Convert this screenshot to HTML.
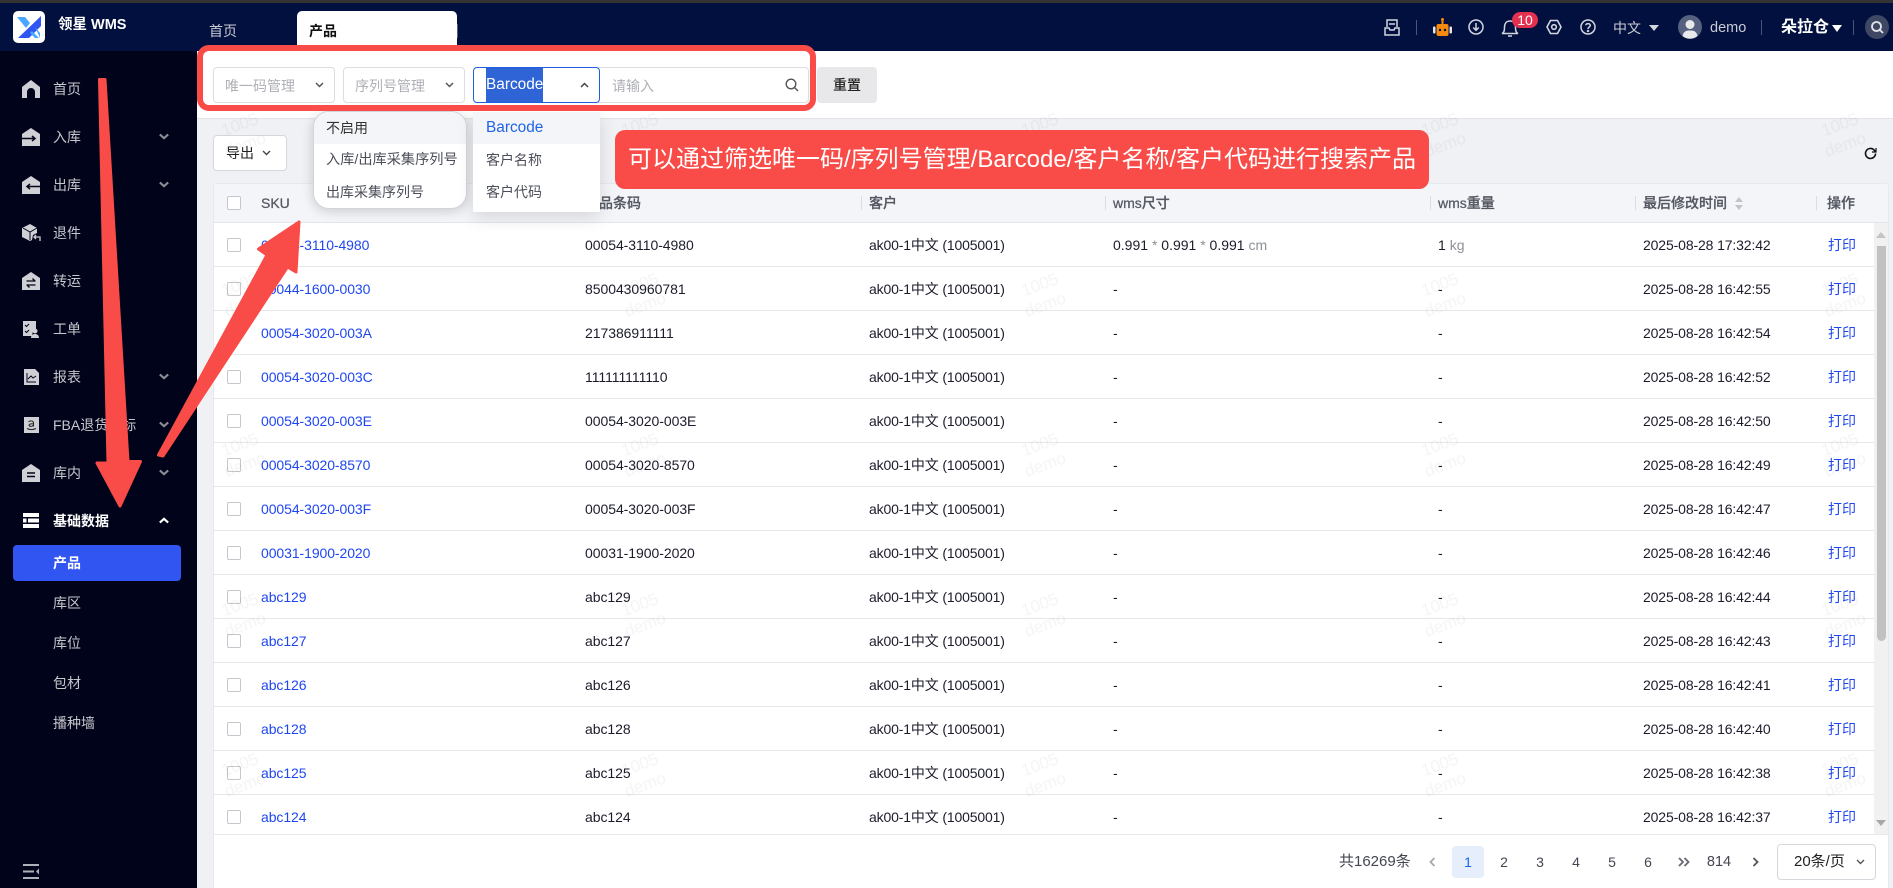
<!DOCTYPE html>
<html lang="zh"><head><meta charset="utf-8"><title>领星 WMS</title>
<style>
*{box-sizing:border-box;margin:0;padding:0}
html,body{width:1893px;height:888px;overflow:hidden;background:#f0f1f5;font-family:"Liberation Sans","Noto Sans CJK SC",sans-serif;font-size:14px;color:#1b1c2b}
.a{position:absolute;white-space:nowrap}
#top{left:0;top:0;width:1893px;height:51px;background:#02103f}
#strip{left:0;top:0;width:1893px;height:3px;background:#333}
#side{left:0;top:51px;width:197px;height:837px;background:#000319}
.m{left:53px;color:#c7c8cd;line-height:20px}
.ic{left:22px;width:18px;height:18px}
.ch{left:159px;width:10px;height:7px}
#bar{left:197px;top:51px;width:1696px;height:68px;background:#fff;border-bottom:1px solid #e3e4e8}
.sel{height:36px;top:67px;background:#fff;border:1px solid #dcdde1;border-radius:4px}
.ph{color:#aeb0b6;line-height:20px}
.dd{background:#fff;box-shadow:0 6px 16px rgba(0,0,0,.12)}
.it{position:absolute;left:0;right:0;height:32px;line-height:32px;padding-left:12px;color:#4c4f59}
#tb{left:213px;top:183px;width:1676px;height:705px;background:#fff;border:1px solid #e8e9ee;border-bottom:0;border-radius:4px 4px 0 0}
#th{left:214px;top:184px;width:1674px;height:39px;background:#f4f5f9;border-bottom:1px solid #e4e5ea}
.h{top:193px;font-weight:500;color:#555862;line-height:20px;-webkit-text-stroke:.25px #555862}
.sp{top:196px;width:1px;height:14px;background:#dcdde2}
.r{position:absolute;left:214px;width:1660px;height:44px;border-bottom:1px solid #e6e7eb}
.r span{position:absolute;top:12px;line-height:20px;white-space:nowrap}
.r i{position:absolute;left:13px;top:15px;width:14px;height:14px;background:#fff;border:1px solid #c6c7cc;border-radius:2px}
.s{left:47px;color:#1f47f0;letter-spacing:-.08px}.b{left:371px;letter-spacing:-.05px}.c{left:655px;letter-spacing:-.15px}.d{left:899px}.w{left:1224px}.t{left:1429px;letter-spacing:-.13px}.o{left:1614px;color:#1f47f0}
.cb{width:14px;height:14px;background:#fff;border:1px solid #c6c7cc;border-radius:2px}
.g{color:#8d9099}
.pg{top:852px;line-height:20px;color:#444652;width:32px;text-align:center}
svg.wm{position:absolute;left:197px;top:51px}
svg{display:block}
</style></head><body>
<div class="a" id="top"></div><div class="a" id="strip"></div>
<svg class="a" style="left:13px;top:11px" width="32" height="32" viewBox="0 0 32 32"><rect width="32" height="32" rx="5" fill="#fff"/><path d="M4 6h8l5 6-4 5z" fill="#4aa6ff"/><path d="M28 5 5 27h11L28 15z" fill="#2f55f2"/><path d="M19 20l7 7h-4l-5-5zM22 16l5 6v5z" fill="#4aa6ff"/></svg>
<div class="a" style="left:58px;top:15px;color:#fff;font-weight:700;line-height:20px;font-size:14.500px">领星 WMS</div>
<div class="a" style="left:209px;top:21px;color:#c9cbd4;line-height:20px">首页</div>
<div class="a" style="left:297px;top:11px;width:160px;height:40px;background:#fff;border-radius:5px 5px 0 0"></div>
<div class="a" style="left:309px;top:21px;font-weight:700;color:#111;line-height:20px">产品</div>
<div class="a" style="left:457px;top:24px;width:1px;height:14px;background:#555e80"></div>

<!-- header right -->
<svg class="a" style="left:1384px;top:19px" width="16" height="17" viewBox="0 0 16 17" fill="none" stroke="#d2d5dd" stroke-width="1.500"><path d="M3 8V1h10v7M5 5h6M1 9l4 0 1 2h4l1-2h4v7H1z"/></svg>
<div class="a" style="left:1416px;top:20px;width:1px;height:15px;background:#4b5575"></div>
<svg class="a" style="left:1433px;top:18px" width="19" height="18" viewBox="0 0 19 18"><rect x="3.500" y="6" width="12" height="12" rx="2" fill="#f58a0c"/><rect x="8.500" y="1" width="2" height="5" fill="#f58a0c"/><circle cx="9.500" cy="1.500" r="1.500" fill="#f58a0c"/><rect x="0" y="8.500" width="2.500" height="7" rx="1" fill="#e6e6e6"/><rect x="16.500" y="8.500" width="2.500" height="7" rx="1" fill="#e6e6e6"/><circle cx="7" cy="12" r="1.200" fill="#02103f"/><circle cx="12" cy="12" r="1.200" fill="#02103f"/></svg>
<svg class="a" style="left:1468px;top:19px" width="16" height="16" viewBox="0 0 16 16" fill="none" stroke="#d2d5dd" stroke-width="1.500"><circle cx="8" cy="8" r="7"/><path d="M8 4v7M5.200 8.500 8 11.300l2.800-2.800"/></svg>
<svg class="a" style="left:1501px;top:19px" width="18" height="18" viewBox="0 0 18 18" fill="none" stroke="#d2d5dd" stroke-width="1.500"><path d="M1 14.500c2-1 2.500-2.500 2.500-6C3.500 4 6 2 9 2s5.500 2 5.500 6.500c0 3.500.5 5 2.500 6zM7 17h4"/></svg>
<div class="a" style="left:1512px;top:12px;width:26px;height:16px;border-radius:8px;background:#e4304f;color:#fff;text-align:center;line-height:16px;font-size:14px">10</div>
<svg class="a" style="left:1546px;top:19px" width="16" height="16" viewBox="0 0 16 16" fill="none" stroke="#d2d5dd" stroke-width="1.600"><path d="M4.500 1.500h7L15 8l-3.500 6.500h-7L1 8z"/><circle cx="8" cy="8" r="2.300"/></svg>
<svg class="a" style="left:1580px;top:19px" width="16" height="16" viewBox="0 0 16 16" fill="none" stroke="#d2d5dd" stroke-width="1.500"><circle cx="8" cy="8" r="7"/><path d="M5.800 6.300C5.800 4 10.300 4 10.300 6.400 10.300 8 8 8 8 10"/><circle cx="8" cy="12" r=".5"/></svg>
<div class="a" style="left:1613px;top:18px;color:#c9cbd4;line-height:20px">中文</div>
<svg class="a" style="left:1649px;top:25px" width="10" height="6"><path d="M0 0h10L5 6z" fill="#d2d5dd"/></svg>
<svg class="a" style="left:1678px;top:15px" width="24" height="24" viewBox="0 0 24 24"><circle cx="12" cy="12" r="12" fill="#56607f"/><circle cx="12" cy="9.500" r="4.500" fill="#e9e9ec"/><path d="M4.500 21c1-5 4-5.500 7.500-5.500S18.500 16 19.500 21a12 12 0 0 1-15 0z" fill="#e9e9ec"/></svg>
<div class="a" style="left:1710px;top:18px;color:#c9cbd4;line-height:20px;font-size:14.500px">demo</div>
<div class="a" style="left:1761px;top:20px;width:1px;height:15px;background:#4b5575"></div>
<div class="a" style="left:1781px;top:17px;color:#fff;font-weight:700;font-size:16px;line-height:22px">朵拉仓</div>
<svg class="a" style="left:1832px;top:25px" width="10" height="7"><path d="M0 0h10L5 7z" fill="#fff"/></svg>
<div class="a" style="left:1853px;top:20px;width:1px;height:15px;background:#4b5575"></div>
<svg class="a" style="left:1865px;top:15px" width="24" height="24" viewBox="0 0 24 24" fill="none"><circle cx="12" cy="12" r="12" fill="#3e4864"/><circle cx="11.500" cy="11.500" r="4.500" stroke="#e3e4ea" stroke-width="1.800"/><path d="m15 15 3 3" stroke="#e3e4ea" stroke-width="1.800"/></svg>

<!-- sidebar -->
<div class="a" id="side"></div>
<svg class="a ic" style="top:80px" viewBox="0 0 18 18"><path d="M9 0 18 7v11h-5v-6a4 4 0 0 0-8 0v6H0V7z" fill="#cfd0d5"/></svg>
<div class="a m" style="top:79px">首页</div>
<svg class="a ic" style="top:128px" viewBox="0 0 18 18"><path d="M9 0l9 6v12H0V6z" fill="#cfd0d5"/><path d="M0 10.500h12M10 8l3 2.500-3 2.500" fill="none" stroke="#000319" stroke-width="1.500"/></svg>
<div class="a m" style="top:127px">入库</div>
<svg class="a ch" style="top:133px" viewBox="0 0 12 8"><path d="M1 1.500 6 6l5-4.500" fill="none" stroke="#8a8b94" stroke-width="2.500"/></svg>
<svg class="a ic" style="top:176px" viewBox="0 0 18 18"><path d="M9 0l9 6v12H0V6z" fill="#cfd0d5"/><path d="M18 10.500H6M8 8l-3 2.500 3 2.500" fill="none" stroke="#000319" stroke-width="1.500"/></svg>
<div class="a m" style="top:175px">出库</div>
<svg class="a ch" style="top:181px" viewBox="0 0 12 8"><path d="M1 1.500 6 6l5-4.500" fill="none" stroke="#8a8b94" stroke-width="2.500"/></svg>
<svg class="a ic" style="top:224px;width:19px" viewBox="0 0 19 18"><path d="M8 0l7 4v5l-4 2-1 5-2 1-8-4V4z" fill="#cfd0d5"/><path d="M1 4l7 4 7-4M8 8v8" fill="none" stroke="#000319" stroke-width="1"/><path d="M18 17v-4h-6M14 11l-2 2 2 2" fill="none" stroke="#cfd0d5" stroke-width="1.300"/></svg>
<div class="a m" style="top:223px">退件</div>
<svg class="a ic" style="top:272px" viewBox="0 0 18 18"><path d="M9 0l9 6v12H0V6z" fill="#cfd0d5"/><path d="M4.500 9h9M10.500 6.500 13 9M13.500 13h-9M7.500 15.500 5 13" fill="none" stroke="#000319" stroke-width="1.300"/></svg>
<div class="a m" style="top:271px">转运</div>
<svg class="a ic" style="top:320px;width:18px" viewBox="0 0 18 18"><path d="M1 1h13v9l-3 1-1 5H1z" fill="#cfd0d5"/><path d="M3 5l1.500 1.500L7 4M3 11l1.500 1.500L7 10" fill="none" stroke="#000319" stroke-width="1"/><circle cx="13" cy="11" r="2.500" fill="#cfd0d5"/><path d="M9 18c0-3 2-4 4-4s4 1 4 4z" fill="#cfd0d5"/></svg>
<div class="a m" style="top:319px">工单</div>
<svg class="a ic" style="top:368px" viewBox="0 0 18 18"><path d="M2 1h11l4 4v12H2z" fill="#cfd0d5"/><path d="M5 5v9h9M6 11l3-3 2 2 3-2" fill="none" stroke="#000319" stroke-width="1"/></svg>
<div class="a m" style="top:367px">报表</div>
<svg class="a ch" style="top:373px" viewBox="0 0 12 8"><path d="M1 1.500 6 6l5-4.500" fill="none" stroke="#8a8b94" stroke-width="2.500"/></svg>
<svg class="a ic" style="top:416px" viewBox="0 0 18 18"><rect x="2" y="1" width="15" height="16" fill="#cfd0d5"/><path d="M6.500 6c1-1.500 4.500-1.500 5 .5v4M11.500 8c-2-.5-4.500 0-4.500 1.300s3 1.700 4.500-.3" fill="none" stroke="#222" stroke-width="1"/><path d="M5 12.500c3 1.500 6 1.500 9 0" fill="none" stroke="#222" stroke-width="1"/></svg>
<div class="a m" style="top:415px">FBA退货贴标</div>
<svg class="a ch" style="top:421px" viewBox="0 0 12 8"><path d="M1 1.500 6 6l5-4.500" fill="none" stroke="#8a8b94" stroke-width="2.500"/></svg>
<svg class="a ic" style="top:464px" viewBox="0 0 18 18"><path d="M9 0l9 6v12H0V6z" fill="#cfd0d5"/><path d="M5 9h8M5 12.500h8" stroke="#000319" stroke-width="1.500"/></svg>
<div class="a m" style="top:463px">库内</div>
<svg class="a ch" style="top:469px" viewBox="0 0 12 8"><path d="M1 1.500 6 6l5-4.500" fill="none" stroke="#8a8b94" stroke-width="2.500"/></svg>
<svg class="a ic" style="top:513px;left:23px;width:16px;height:15px" viewBox="0 0 16 15"><path d="M0 0h16v4H0zM0 5.500h3.500v4H0zM5 5.500h11v4H5zM0 11h16v4H0z" fill="#fff"/></svg>
<div class="a m" style="top:511px;color:#fff;font-weight:700">基础数据</div>
<svg class="a ch" style="top:517px" viewBox="0 0 12 8"><path d="M1 6.500 6 2l5 4.500" fill="none" stroke="#fff" stroke-width="2.500"/></svg>
<div class="a" style="left:13px;top:545px;width:168px;height:36px;background:#3055f0;border-radius:4px"></div>
<div class="a m" style="top:553px;color:#fff;font-weight:700">产品</div>
<div class="a m" style="top:593px">库区</div>
<div class="a m" style="top:633px">库位</div>
<div class="a m" style="top:673px">包材</div>
<div class="a m" style="top:713px">播种墙</div>
<svg class="a" style="left:23px;top:864px" width="16" height="15" viewBox="0 0 16 15"><path d="M0 1h16M0 7.500h11M0 14h16" stroke="#aeb0b8" stroke-width="2"/><path d="M16 4.500v6l-3-3z" fill="#aeb0b8"/></svg>

<!-- search bar -->
<div class="a" id="bar"></div>
<div class="a sel" style="left:213px;width:122px"></div>
<div class="a ph" style="left:225px;top:76px">唯一码管理</div>
<svg class="a" style="left:315px;top:82px" width="9" height="6"><path d="M1 1l3.500 3.500L8 1" fill="none" stroke="#555" stroke-width="1.500"/></svg>
<div class="a sel" style="left:343px;width:122px"></div>
<div class="a ph" style="left:355px;top:76px">序列号管理</div>
<svg class="a" style="left:445px;top:82px" width="9" height="6"><path d="M1 1l3.500 3.500L8 1" fill="none" stroke="#555" stroke-width="1.500"/></svg>
<div class="a sel" style="left:598px;width:211px;border-radius:0 4px 4px 0"></div>
<div class="a sel" style="left:473px;width:127px;border-color:#1f5fe0"></div>
<div class="a" style="left:486px;top:68px;width:57px;height:34px;background:#2e64d6"></div>
<div class="a" style="left:486px;top:75px;color:#fff;line-height:20px;font-size:15.400px">Barcode</div>
<svg class="a" style="left:580px;top:82px" width="9" height="6"><path d="M1 5l3.500-3.500L8 5" fill="none" stroke="#444" stroke-width="1.500"/></svg>
<div class="a ph" style="left:612px;top:76px">请输入</div>
<svg class="a" style="left:785px;top:78px" width="14" height="14" fill="none" stroke="#555" stroke-width="1.400"><circle cx="6" cy="6" r="4.800"/><path d="m9.500 9.500 3.500 3.500"/></svg>
<div class="a" style="left:817px;top:67px;width:60px;height:36px;background:#e8e8ea;border-radius:4px;text-align:center;line-height:36px;color:#222;font-weight:500">重置</div>

<!-- toolbar -->
<div class="a" style="left:213px;top:135px;width:74px;height:36px;background:#fff;border:1px solid #d6d7dc;border-radius:4px"></div>
<div class="a" style="left:226px;top:143px;line-height:20px;color:#222">导出</div>
<svg class="a" style="left:262px;top:150px" width="9" height="6"><path d="M1 1l3.500 3.500L8 1" fill="none" stroke="#444" stroke-width="1.400"/></svg>
<svg class="a" style="left:1864px;top:147px" width="13" height="13" viewBox="0 0 13 13" fill="none" stroke="#111" stroke-width="1.600"><path d="M11.500 6.500a5 5 0 1 1-1.500-3.600L12 5"/><path d="M12 1v4H8" stroke-width="1.200"/></svg>

<!-- table -->
<div class="a" id="tb"></div>
<div class="a" id="th"></div>
<div class="a cb" style="left:227px;top:196px"></div>
<div class="a h" style="left:261px">SKU</div>
<div class="a h" style="left:585px">商品条码</div>
<div class="a sp" style="left:861px"></div><div class="a h" style="left:869px">客户</div>
<div class="a sp" style="left:1105px"></div><div class="a h" style="left:1113px">wms尺寸</div>
<div class="a sp" style="left:1430px"></div><div class="a h" style="left:1438px">wms重量</div>
<div class="a sp" style="left:1635px"></div><div class="a h" style="left:1643px">最后修改时间</div>
<svg class="a" style="left:1735px;top:197px" width="8" height="13"><path d="M0 5l4-5 4 5zM0 8l4 5 4-5z" fill="#c2c4ca"/></svg>
<div class="a sp" style="left:1816px"></div><div class="a h" style="left:1827px">操作</div>

<div class="r" style="top:223px"><i></i><span class="s">00054-3110-4980</span><span class="b">00054-3110-4980</span><span class="c">ak00-1中文 (1005001)</span><span class="d">0.991 <b class="g" style="font-weight:400">*</b> 0.991 <b class="g" style="font-weight:400">*</b> 0.991 <b class="g" style="font-weight:400">cm</b></span><span class="w">1 <b class="g" style="font-weight:400">kg</b></span><span class="t">2025-08-28 17:32:42</span><span class="o">打印</span></div>
<div class="r" style="top:267px"><i></i><span class="s">00044-1600-0030</span><span class="b">8500430960781</span><span class="c">ak00-1中文 (1005001)</span><span class="d">-</span><span class="w">-</span><span class="t">2025-08-28 16:42:55</span><span class="o">打印</span></div>
<div class="r" style="top:311px"><i></i><span class="s">00054-3020-003A</span><span class="b">217386911111</span><span class="c">ak00-1中文 (1005001)</span><span class="d">-</span><span class="w">-</span><span class="t">2025-08-28 16:42:54</span><span class="o">打印</span></div>
<div class="r" style="top:355px"><i></i><span class="s">00054-3020-003C</span><span class="b">111111111110</span><span class="c">ak00-1中文 (1005001)</span><span class="d">-</span><span class="w">-</span><span class="t">2025-08-28 16:42:52</span><span class="o">打印</span></div>
<div class="r" style="top:399px"><i></i><span class="s">00054-3020-003E</span><span class="b">00054-3020-003E</span><span class="c">ak00-1中文 (1005001)</span><span class="d">-</span><span class="w">-</span><span class="t">2025-08-28 16:42:50</span><span class="o">打印</span></div>
<div class="r" style="top:443px"><i></i><span class="s">00054-3020-8570</span><span class="b">00054-3020-8570</span><span class="c">ak00-1中文 (1005001)</span><span class="d">-</span><span class="w">-</span><span class="t">2025-08-28 16:42:49</span><span class="o">打印</span></div>
<div class="r" style="top:487px"><i></i><span class="s">00054-3020-003F</span><span class="b">00054-3020-003F</span><span class="c">ak00-1中文 (1005001)</span><span class="d">-</span><span class="w">-</span><span class="t">2025-08-28 16:42:47</span><span class="o">打印</span></div>
<div class="r" style="top:531px"><i></i><span class="s">00031-1900-2020</span><span class="b">00031-1900-2020</span><span class="c">ak00-1中文 (1005001)</span><span class="d">-</span><span class="w">-</span><span class="t">2025-08-28 16:42:46</span><span class="o">打印</span></div>
<div class="r" style="top:575px"><i></i><span class="s">abc129</span><span class="b">abc129</span><span class="c">ak00-1中文 (1005001)</span><span class="d">-</span><span class="w">-</span><span class="t">2025-08-28 16:42:44</span><span class="o">打印</span></div>
<div class="r" style="top:619px"><i></i><span class="s">abc127</span><span class="b">abc127</span><span class="c">ak00-1中文 (1005001)</span><span class="d">-</span><span class="w">-</span><span class="t">2025-08-28 16:42:43</span><span class="o">打印</span></div>
<div class="r" style="top:663px"><i></i><span class="s">abc126</span><span class="b">abc126</span><span class="c">ak00-1中文 (1005001)</span><span class="d">-</span><span class="w">-</span><span class="t">2025-08-28 16:42:41</span><span class="o">打印</span></div>
<div class="r" style="top:707px"><i></i><span class="s">abc128</span><span class="b">abc128</span><span class="c">ak00-1中文 (1005001)</span><span class="d">-</span><span class="w">-</span><span class="t">2025-08-28 16:42:40</span><span class="o">打印</span></div>
<div class="r" style="top:751px"><i></i><span class="s">abc125</span><span class="b">abc125</span><span class="c">ak00-1中文 (1005001)</span><span class="d">-</span><span class="w">-</span><span class="t">2025-08-28 16:42:38</span><span class="o">打印</span></div>
<div class="r" style="top:795px;height:40px"><i></i><span class="s">abc124</span><span class="b">abc124</span><span class="c">ak00-1中文 (1005001)</span><span class="d">-</span><span class="w">-</span><span class="t">2025-08-28 16:42:37</span><span class="o">打印</span></div>

<!-- scrollbar -->
<div class="a" style="left:1874px;top:223px;width:14px;height:612px;background:#f1f1f1"></div>
<svg class="a" style="left:1876px;top:232px" width="10" height="6"><path d="M0 6l5-6 5 6z" fill="#c4c4c4"/></svg>
<svg class="a" style="left:1876px;top:820px" width="10" height="6"><path d="M0 0l5 6 5-6z" fill="#a8a8a8"/></svg>
<div class="a" style="left:1877px;top:246px;width:9px;height:395px;background:#c1c1c1;border-radius:0 0 5px 5px"></div>

<!-- footer -->
<div class="a" style="left:214px;top:834px;width:1674px;height:54px;background:#fff;border-top:1px solid #e9eaee"></div>
<div class="a" style="left:1339px;top:852px;line-height:20px;color:#444652;font-size:15px">共16269条</div>
<svg class="a" style="left:1429px;top:857px" width="7" height="10"><path d="M5.500 1 1.500 5l4 4" fill="none" stroke="#a6a8ae" stroke-width="1.800"/></svg>
<div class="a" style="left:1452px;top:846px;width:32px;height:32px;background:#e6edfb;border-radius:4px"></div>
<div class="a pg" style="left:1452px;color:#1766e8">1</div>
<div class="a pg" style="left:1488px">2</div><div class="a pg" style="left:1524px">3</div><div class="a pg" style="left:1560px">4</div><div class="a pg" style="left:1596px">5</div><div class="a pg" style="left:1632px">6</div>
<svg class="a" style="left:1678px;top:857px" width="12" height="10" fill="none" stroke="#666872" stroke-width="1.800"><path d="M1 1l4 4-4 4M6.500 1l4 4-4 4"/></svg>
<div class="a pg" style="left:1703px;font-size:14.500px">814</div>
<svg class="a" style="left:1752px;top:857px" width="7" height="10"><path d="M1.500 1l4 4-4 4" fill="none" stroke="#555" stroke-width="1.800"/></svg>
<div class="a" style="left:1777px;top:844px;width:99px;height:36px;background:#fff;border:1px solid #d6d7dc;border-radius:4px"></div>
<div class="a" style="left:1794px;top:852px;line-height:20px;color:#222;font-size:15px">20条/页</div>
<svg class="a" style="left:1856px;top:859px" width="9" height="6"><path d="M1 1l3.500 3.500L8 1" fill="none" stroke="#555" stroke-width="1.400"/></svg>

<!-- watermark -->
<svg class="wm" width="1696" height="837" viewBox="197 51 1696 837" font-family="Liberation Sans,sans-serif" font-size="17" fill="#000" fill-opacity=".045">
<text x="220" y="130" transform="rotate(-20 240 122)">1005</text><text x="223" y="150" transform="rotate(-20 245 142)">demo</text>
<text x="620" y="130" transform="rotate(-20 640 122)">1005</text><text x="623" y="150" transform="rotate(-20 645 142)">demo</text>
<text x="1020" y="130" transform="rotate(-20 1040 122)">1005</text><text x="1023" y="150" transform="rotate(-20 1045 142)">demo</text>
<text x="1420" y="130" transform="rotate(-20 1440 122)">1005</text><text x="1423" y="150" transform="rotate(-20 1445 142)">demo</text>
<text x="1820" y="130" transform="rotate(-20 1840 122)">1005</text><text x="1823" y="150" transform="rotate(-20 1845 142)">demo</text>
<text x="220" y="290" transform="rotate(-20 240 282)">1005</text><text x="223" y="310" transform="rotate(-20 245 302)">demo</text>
<text x="620" y="290" transform="rotate(-20 640 282)">1005</text><text x="623" y="310" transform="rotate(-20 645 302)">demo</text>
<text x="1020" y="290" transform="rotate(-20 1040 282)">1005</text><text x="1023" y="310" transform="rotate(-20 1045 302)">demo</text>
<text x="1420" y="290" transform="rotate(-20 1440 282)">1005</text><text x="1423" y="310" transform="rotate(-20 1445 302)">demo</text>
<text x="1820" y="290" transform="rotate(-20 1840 282)">1005</text><text x="1823" y="310" transform="rotate(-20 1845 302)">demo</text>
<text x="220" y="450" transform="rotate(-20 240 442)">1005</text><text x="223" y="470" transform="rotate(-20 245 462)">demo</text>
<text x="620" y="450" transform="rotate(-20 640 442)">1005</text><text x="623" y="470" transform="rotate(-20 645 462)">demo</text>
<text x="1020" y="450" transform="rotate(-20 1040 442)">1005</text><text x="1023" y="470" transform="rotate(-20 1045 462)">demo</text>
<text x="1420" y="450" transform="rotate(-20 1440 442)">1005</text><text x="1423" y="470" transform="rotate(-20 1445 462)">demo</text>
<text x="1820" y="450" transform="rotate(-20 1840 442)">1005</text><text x="1823" y="470" transform="rotate(-20 1845 462)">demo</text>
<text x="220" y="610" transform="rotate(-20 240 602)">1005</text><text x="223" y="630" transform="rotate(-20 245 622)">demo</text>
<text x="620" y="610" transform="rotate(-20 640 602)">1005</text><text x="623" y="630" transform="rotate(-20 645 622)">demo</text>
<text x="1020" y="610" transform="rotate(-20 1040 602)">1005</text><text x="1023" y="630" transform="rotate(-20 1045 622)">demo</text>
<text x="1420" y="610" transform="rotate(-20 1440 602)">1005</text><text x="1423" y="630" transform="rotate(-20 1445 622)">demo</text>
<text x="1820" y="610" transform="rotate(-20 1840 602)">1005</text><text x="1823" y="630" transform="rotate(-20 1845 622)">demo</text>
<text x="220" y="770" transform="rotate(-20 240 762)">1005</text><text x="223" y="790" transform="rotate(-20 245 782)">demo</text>
<text x="620" y="770" transform="rotate(-20 640 762)">1005</text><text x="623" y="790" transform="rotate(-20 645 782)">demo</text>
<text x="1020" y="770" transform="rotate(-20 1040 762)">1005</text><text x="1023" y="790" transform="rotate(-20 1045 782)">demo</text>
<text x="1420" y="770" transform="rotate(-20 1440 762)">1005</text><text x="1423" y="790" transform="rotate(-20 1445 782)">demo</text>
<text x="1820" y="770" transform="rotate(-20 1840 762)">1005</text><text x="1823" y="790" transform="rotate(-20 1845 782)">demo</text>
</svg>

<!-- dropdowns -->
<div class="a dd" style="left:313px;top:111px;width:154px;height:98px;border:1px solid #d4d5da;border-radius:16px;overflow:hidden;box-shadow:0 2px 12px rgba(0,0,0,.18)">
<div class="it" style="top:0;background:#f4f5f8;color:#333">不启用</div><div class="it" style="top:32px;font-size:14.200px">入库/出库采集序列号</div><div class="it" style="top:64px">出库采集序列号</div></div>
<div class="a dd" style="left:473px;top:111px;width:127px;height:101px">
<div class="it" style="top:1px;background:#f4f5f8;color:#1f63e6;font-size:15.400px;padding-left:13px">Barcode</div><div class="it" style="top:33px;padding-left:13px">客户名称</div><div class="it" style="top:65px;padding-left:13px">客户代码</div></div>

<!-- annotations -->
<div class="a" style="left:197px;top:45px;width:619px;height:66px;border:6px solid #f94c48;border-radius:12px"></div>
<div class="a" style="left:615px;top:130px;width:814px;height:59px;background:#f94c48;border-radius:10px;color:#fff;font-size:24px;line-height:59px;padding-left:13px">可以通过筛选唯一码/序列号管理/Barcode/客户名称/客户代码进行搜索产品</div>
<svg class="a" style="left:0;top:0" width="400" height="520" viewBox="0 0 400 520" fill="#f94c48" stroke="#f94c48" stroke-width="3" stroke-linejoin="round">
<path d="M99.500 79.500h5.500l23 382h12.500L120 506 97 463h11z"/>
<path d="M158.500 455 267 255l-8.500-6L299 222l-3 50-8.500-5L163 456z"/>
</svg>
</body></html>
